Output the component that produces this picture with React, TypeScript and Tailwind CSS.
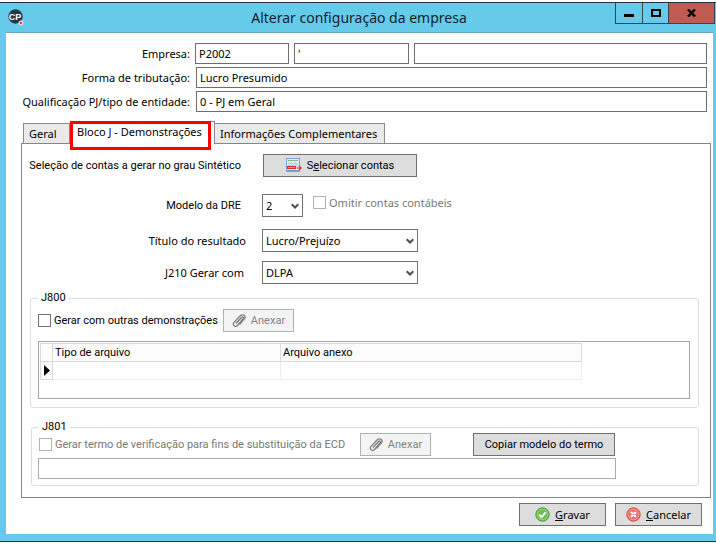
import type { ReactNode } from "react";

const ui = "font-['Noto_Sans',sans-serif] text-[11px]";
const classic = "font-['Roboto',sans-serif] text-[11px]";
const field =
  "h-[21px] min-w-0 border border-[#6d6d70] bg-white px-[3px] text-black outline-none";

function AppIcon() {
  return (
    <svg width="17" height="17" viewBox="0 0 17 17" aria-hidden="true">
      <circle cx="7.5" cy="7.5" r="7.2" fill="#22384f" />
      <text x="7" y="10.5" textAnchor="middle" fontSize="9" fontWeight="700" fontFamily="Liberation Sans, sans-serif" fill="#fff">
        CP
      </text>
      <circle cx="13" cy="14" r="2.5" fill="#f3d6da" />
      <circle cx="13" cy="14" r="1.2" fill="#d33a46" />
    </svg>
  );
}

function ListIcon() {
  return (
    <svg width="16" height="15" viewBox="0 0 16 15" aria-hidden="true">
      <rect x="0.5" y="0.5" width="13" height="13" fill="#dcebfa" stroke="#7ea3d8" />
      <rect x="2" y="2" width="10" height="1" fill="#8ab884" />
      <path d="M2 5.500h10M2 7.500h10" stroke="#a9c4e8" />
      <path d="M5.500 4v4M9.500 4v4" stroke="#c3d6ee" />
      <rect x="1.500" y="8.500" width="8" height="2" fill="#ff8a80" stroke="#d8322c" />
      <path d="M1 12.500h12" stroke="#6f98d2" />
      <path d="M10.500 10h4.500M13 7.800L15.200 10l-2.200 2.200" stroke="#ea2b2b" strokeWidth="1.200" fill="none" />
    </svg>
  );
}

function ClipIcon() {
  return (
    <svg width="14" height="14" viewBox="0 0 14 14" fill="none" aria-hidden="true">
      <path
        d="M4 9.500L9.500 3.500C10.500 2.500 12 3.500 11.200 4.700L5.500 11.500C3.800 13.400 0.300 11.800 1.700 8.800L8 2C10 0 13.800 0.800 13 4L7.500 10.500"
        stroke="#808080"
        strokeWidth="1.400"
      />
      <path d="M2.500 9L8.500 2.500" stroke="#b9b9b9" />
    </svg>
  );
}

function OkIcon() {
  return (
    <svg width="15" height="15" viewBox="0 0 15 15" aria-hidden="true">
      <circle cx="7.5" cy="7.5" r="6.700" fill="#6cbf50" stroke="#4a9a3c" />
      <circle cx="7.5" cy="7.5" r="5.300" fill="none" stroke="#a5dc8f" strokeWidth="0.800" />
      <path d="M4.200 7.600l2.300 2.400 4.300-4.600" stroke="#fff" strokeWidth="1.900" fill="none" />
    </svg>
  );
}

function CancelIcon() {
  return (
    <svg width="15" height="15" viewBox="0 0 15 15" aria-hidden="true">
      <circle cx="7.5" cy="7.5" r="6.700" fill="#ee6a60" stroke="#d94a44" />
      <circle cx="7.5" cy="7.5" r="5.300" fill="none" stroke="#f9b0a8" strokeWidth="0.800" />
      <path d="M5 5l5 5M10 5l-5 5" stroke="#fff" strokeWidth="2.200" />
      <path d="M6.500 7.500h2" stroke="#ee6a60" strokeWidth="0.800" />
    </svg>
  );
}

function PushButton({
  children,
  icon,
  disabled = false,
  className,
}: {
  children: ReactNode;
  icon?: ReactNode;
  disabled?: boolean;
  className: string;
}) {
  return (
    <button
      type="button"
      disabled={disabled}
      className={`flex h-[23px] shrink-0 items-center justify-center gap-[5px] border border-[#707070] bg-[#dddddd] text-black disabled:border-[#adb2b5] disabled:bg-[#f4f4f4] disabled:text-[#838383] ${className}`}
    >
      {icon}
      <span>{children}</span>
    </button>
  );
}

function Combo({ id, value, className }: { id: string; value: string; className: string }) {
  return (
    <div className={`relative h-[23px] ${className}`}>
      <select
        id={id}
        defaultValue={value}
        className="h-full w-full appearance-none border border-[#707070] bg-white px-[3px] text-black outline-none"
      >
        <option>{value}</option>
      </select>
      <svg className="pointer-events-none absolute top-[9px] right-1" width="8" height="7" viewBox="0 0 8 7" fill="none" aria-hidden="true">
        <path d="M0.700 1.200L4 4.500L7.300 1.200" stroke="#505050" strokeWidth="2" />
      </svg>
    </div>
  );
}

function Check({ label, disabled = false, className }: { label: string; disabled?: boolean; className: string }) {
  return (
    <label className={`flex items-center gap-[3px] whitespace-nowrap ${disabled ? "text-[#787878]" : "text-black"} ${className}`}>
      <input
        type="checkbox"
        disabled={disabled}
        className="size-[13px] shrink-0 appearance-none border border-[#707070] bg-white disabled:border-[#b0b2b4]"
      />
      {label}
    </label>
  );
}

function HeaderRow({ id, label, value }: { id: string; label: string; value: string }) {
  return (
    <div className="flex items-center gap-1.5">
      <label htmlFor={id} className="w-[184px] shrink-0 text-right whitespace-nowrap">
        {label}
      </label>
      <input id={id} defaultValue={value} className={`flex-1 ${field}`} />
    </div>
  );
}

export default function App() {
  return (
    <div className={`bg-white pt-0.5 leading-4 text-black ${ui}`}>
      <div className="border-y border-[#26323a] bg-[#66caea]">
        <header className="flex h-[29px] items-start pr-px pl-2">
          <div className="w-[95px] pt-1.5">
            <AppIcon />
          </div>
          <h1 className="flex-1 pt-[3px] text-center text-[14px] leading-6 text-[#14232b]">Alterar configuração da empresa</h1>
          <div className="flex h-[21px] border-x border-b border-[#33444d]">
            <button type="button" aria-label="Minimizar" className="flex w-[27px] items-center justify-center border-r border-[#33444d] pt-1">
              <span className="h-[3px] w-2.5 bg-black" />
            </button>
            <button type="button" aria-label="Maximizar" className="flex w-[26px] items-center justify-center border-r border-[#33444d]">
              <span className="h-2 w-2.5 border-2 border-black" />
            </button>
            <button type="button" aria-label="Fechar" className="flex w-[45px] items-center justify-center bg-[#c15a50]">
              <svg width="9" height="8" viewBox="0 0 9 8" aria-hidden="true">
                <path d="M1 0.500L8 7.500M8 0.500L1 7.500" stroke="#000" strokeWidth="2.400" />
              </svg>
            </button>
          </div>
        </header>

        <main className="mr-[3px] mb-[7px] ml-1.5 border-t border-[#6aa5bd] bg-white pb-2">
          <form>
            <div className="flex flex-col gap-[3px] pt-2.5 pr-1.5">
              <div className="flex items-center gap-[5px]">
                <label htmlFor="empresa" className="w-[184px] shrink-0 text-right">
                  Empresa:
                </label>
                <input id="empresa" defaultValue="P2002" className={`w-[94px] ${field}`} />
                <input aria-label="Filial" defaultValue="'" className={`w-[115px] ${field}`} />
                <input aria-label="Nome da empresa" className={`flex-1 ${field}`} />
              </div>
              <HeaderRow id="tributacao" label="Forma de tributação:" value="Lucro Presumido" />
              <HeaderRow id="qualificacao" label="Qualificação PJ/tipo de entidade:" value="0 - PJ em Geral" />
            </div>

            <div role="tablist" className="ml-[17px] flex items-end pt-[9px]">
              <button type="button" role="tab" className="h-5 w-[47px] border border-b-0 border-[#8b8b97] bg-[#eaeaea] pl-[5px] text-left">
                Geral
              </button>
              <button
                type="button"
                role="tab"
                aria-selected="true"
                className="relative z-10 -mb-px h-[23px] w-[145px] border border-b-0 border-[#8b8b97] bg-white pb-0.5 pl-1.5 text-left whitespace-nowrap"
              >
                Bloco J - Demonstrações
                <span className="pointer-events-none absolute -top-px -left-px h-[29px] w-[141px] border-[3px] border-[#ff0000]" />
              </button>
              <button type="button" role="tab" className="h-5 w-[170px] border border-b-0 border-l-0 border-[#8b8b97] bg-[#eaeaea] pl-[5px] text-left whitespace-nowrap">
                Informações Complementares
              </button>
            </div>

            <section className="mr-0.5 ml-[15px] border border-[#85858f] px-2 pt-2.5 pb-[11px]">
              <div className="grid grid-cols-[232px_auto] justify-start">
                <span className={`flex h-[23px] items-center justify-end pr-[21px] whitespace-nowrap ${classic}`}>
                  Seleção de contas a gerar no grau Sintético
                </span>
                <PushButton icon={<ListIcon />} className={`ml-px w-[154px] ${classic}`}>
                  S<u>e</u>lecionar contas
                </PushButton>

                <label htmlFor="modelo" className={`mt-[17px] flex h-[23px] items-center justify-end pr-[21px] ${classic}`}>
                  Modelo da DRE
                </label>
                <div className="mt-[17px] flex gap-2.5">
                  <Combo id="modelo" value="2" className="w-[41px]" />
                  <Check label="Omitir contas contábeis" disabled className="h-[17px]" />
                </div>

                <label htmlFor="titulo" className="mt-3 flex h-[23px] items-center justify-end pr-4">
                  Título do resultado
                </label>
                <Combo id="titulo" value="Lucro/Prejuízo" className="mt-3 w-[156px]" />

                <label htmlFor="j210" className="mt-[9px] flex h-[23px] items-center justify-end pr-[18px]">
                  J210 Gerar com
                </label>
                <Combo id="j210" value="DLPA" className="mt-[9px] w-[156px]" />
              </div>

              <fieldset className={`mt-[7px] mr-[3px] rounded-[3px] border border-[#d5dfe5] px-[7px] pb-2 ${classic}`}>
                <legend className="px-[3px] leading-[14px]">J800</legend>
                <div className="flex items-center gap-3 pt-1">
                  <Check label="Gerar com outras demonstrações" className="w-[173px]" />
                  <PushButton disabled icon={<ClipIcon />} className="w-[71px]">
                    Anexar
                  </PushButton>
                </div>
                <div className="mt-[9px] mr-px h-[58px] border border-[#a5a5a9] p-px">
                  <table className="w-[542px] table-fixed border-collapse text-left">
                    <thead>
                      <tr className="h-[18px] bg-[#fcfcfc]">
                        <th className="w-3 border border-[#dadada] p-0" />
                        <th className="w-[228px] border border-[#dadada] p-0 pl-0.5 font-normal">Tipo de arquivo</th>
                        <th className="border border-[#dadada] p-0 pl-0.5 font-normal">Arquivo anexo</th>
                      </tr>
                    </thead>
                    <tbody>
                      <tr className="h-[18px]">
                        <td className="border border-[#dadada] bg-[#fafafa] p-0">
                          <svg className="mx-auto" width="6" height="11" viewBox="0 0 6 11" aria-hidden="true">
                            <path d="M0 0L6 5.500L0 11Z" fill="#000" />
                          </svg>
                        </td>
                        <td className="border border-[#eeeeee] p-0" />
                        <td className="border border-[#eeeeee] p-0" />
                      </tr>
                    </tbody>
                  </table>
                </div>
              </fieldset>

              <fieldset className={`mt-3 mr-[3px] ml-px rounded-[3px] border border-[#d5dfe5] px-1.5 pb-1.5 ${classic}`}>
                <legend className="ml-px px-[3px] leading-[14px]">J801</legend>
                <div className="flex h-[22px] items-end pl-px">
                  <Check label="Gerar termo de verificação para fins de substituição da ECD" disabled className="h-[23px] w-[321px]" />
                  <PushButton disabled icon={<ClipIcon />} className="w-[71px]">
                    Anexar
                  </PushButton>
                  <PushButton className="ml-[42px] w-[142px]">Copiar modelo do termo</PushButton>
                </div>
                <input aria-label="Arquivo do termo" disabled className="mt-0.5 block h-[21px] w-[578px] border border-[#a9adb0] bg-white" />
              </fieldset>
            </section>

            <div className="flex justify-end gap-[9px] pt-[5px] pr-[11px]">
              <PushButton icon={<OkIcon />} className="w-[87px]">
                <u>G</u>ravar
              </PushButton>
              <PushButton icon={<CancelIcon />} className="w-[87px]">
                <u>C</u>ancelar
              </PushButton>
            </div>
          </form>
        </main>
      </div>
    </div>
  );
}
